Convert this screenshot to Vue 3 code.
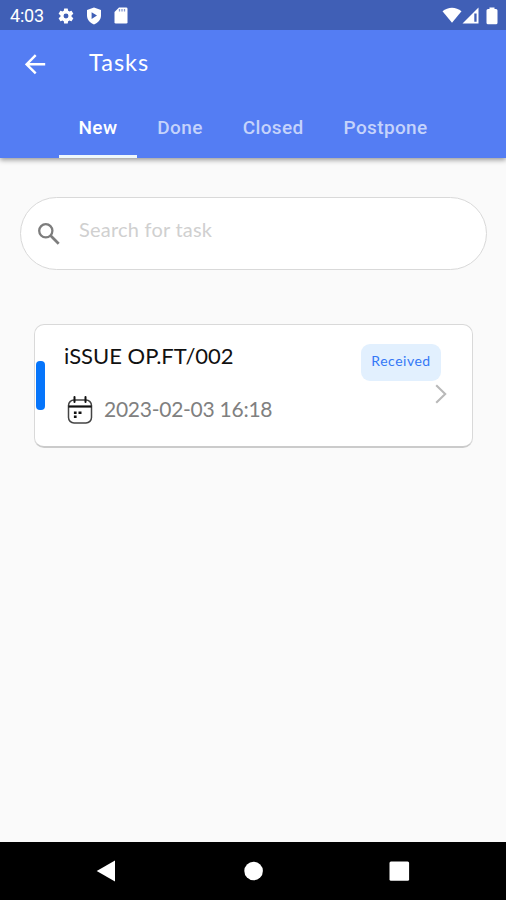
<script setup>
import { ref } from 'vue'

const tabs = ['New', 'Done', 'Closed', 'Postpone']
const active = ref('New')
const query = ref('')
const tasks = [{ title: 'iSSUE OP.FT/002', date: '2023-02-03 16:18', status: 'Received' }]
</script>

<template>
  <div class="screen">
    <header class="header">
      <div class="status">
        <span class="clock">4:03</span>
        <svg class="gear" viewBox="0 0 24 24"><path fill="#fff" fill-rule="evenodd" d="M19.4 13a7.8 7.8 0 0 0 0-2l2.1-1.6a.6.6 0 0 0 .1-.7l-2-3.4a.5.5 0 0 0-.6-.2l-2.500 1a7.300 7.300 0 0 0-1.700-1L14.400 2.400a.5.5 0 0 0-.5-.4h-4a.5.5 0 0 0-.5.4L9.100 5.100a7.700 7.700 0 0 0-1.700 1l-2.500-1a.5.5 0 0 0-.6.2l-2 3.400a.5.5 0 0 0 .1.700L4.600 11a7.800 7.800 0 0 0 0 2l-2.200 1.600a.5.5 0 0 0-.1.700l2 3.400c.1.200.400.300.6.200l2.500-1c.5.400 1.100.700 1.700 1l.300 2.700c0 .2.200.4.5.4h4c.300 0 .5-.2.5-.4l.4-2.700a7.300 7.300 0 0 0 1.700-1l2.500 1c.200.1.5 0 .6-.2l2-3.400a.5.5 0 0 0-.1-.700zM12 15.300a3.300 3.300 0 1 1 0-6.600 3.300 3.300 0 0 1 0 6.600z" /></svg>
        <svg class="shield" viewBox="0 0 16 18"><path fill="#fff" fill-rule="evenodd" d="M8 .5 15 3v5.500c0 4-3 7.500-7 9-4-1.500-7-5-7-9V3zM5.600 5.300v6.600L11 8.600z" /></svg>
        <svg class="sd" viewBox="0 0 14 17"><path fill="#fff" d="M5 .5h7.200q1.300 0 1.300 1.300v13.400q0 1.300-1.300 1.300H1.800Q.5 16.500.5 15.200V5z" /><path d="M5.500 2v2.500M8 2v2.500M10.500 2v2.500" stroke="#8397cf" stroke-width="1.300" /></svg>
        <span class="spacer"></span>
        <svg class="wifi" viewBox="0 0 20 16"><path fill="#fff" d="M.5 4.300C6-.4 14-.4 19.500 4.300L10 15.800z" /></svg>
        <svg class="signal" viewBox="0 0 17 17"><path fill="#fff" fill-rule="evenodd" d="M16.500.5v16H.5zM12.300 6.500v8.300h2.300V6.500z" /></svg>
        <svg class="battery" viewBox="0 0 12 18"><path fill="#fff" d="M3.500.5h5V2H10q1.500 0 1.500 1.500v12.300q0 1.500-1.500 1.500H2Q.5 17.300.5 15.800V3.500Q.5 2 2 2h1.500z" /></svg>
      </div>
      <div class="appbar">
        <svg class="back" viewBox="0 0 22 22"><path d="M20.200 11.300H1.900M10.700 2.200l-9.100 9.100 9.100 9.100" fill="none" stroke="#fff" stroke-width="2.400" /></svg>
        <h1>Tasks</h1>
      </div>
      <nav class="tabs">
        <button v-for="t in tabs" :key="t" :class="{ on: t === active }" @click="active = t">{{ t }}</button>
      </nav>
    </header>

    <main class="content">
      <label class="search">
        <svg viewBox="0 0 24 24"><circle cx="8.800" cy="8.800" r="6.600" fill="none" stroke="#7d7d7d" stroke-width="2.300" /><path d="m13.500 13.500 8.200 8.200" stroke="#7d7d7d" stroke-width="2.700" /></svg>
        <input v-model="query" placeholder="Search for task" />
      </label>

      <article v-for="t in tasks" :key="t.title" class="card">
        <span class="mark"></span>
        <div class="info">
          <h2>{{ t.title }}</h2>
          <div class="when">
            <svg viewBox="0 0 26 28"><rect x="1.500" y="4" width="23" height="23" rx="5.500" fill="none" stroke="#444" stroke-width="1.500" /><path d="M1.500 10.500h23" stroke="#111" stroke-width="2.200" /><path d="M7.500 1v5M18.500 1v5" stroke="#111" stroke-width="2" stroke-linecap="round" /><path d="M6.900 16.800h2.700M11.500 16.800h3M6.900 20.700h2.700" stroke="#111" stroke-width="2.400" /></svg>
            <time>{{ t.date }}</time>
          </div>
        </div>
        <div class="side">
          <span class="badge">{{ t.status }}</span>
          <svg viewBox="0 0 12 20"><path d="m1.200 1.200 9 8.800-9 8.800" fill="none" stroke="#b9b9b9" stroke-width="2.100" /></svg>
        </div>
      </article>
    </main>

    <footer class="navbar">
      <svg viewBox="0 0 22 22"><path fill="#fff" d="M19 .5v21L.7 11z" /></svg>
      <svg viewBox="0 0 22 22"><circle cx="11.600" cy="11" r="9.300" fill="#fff" /></svg>
      <svg viewBox="0 0 22 22"><rect x="1.500" y="1.500" width="19.600" height="19.300" rx="1.500" fill="#fff" /></svg>
    </footer>
  </div>
</template>

<style>
body { margin: 0; }
</style>

<style scoped>
* { box-sizing: border-box; }
.screen { display: flex; flex-direction: column; width: 506px; height: 900px; overflow: hidden; background: #fafafa; font-family: Lato, sans-serif; }
svg { display: block; flex: none; }
.header { height: 158px; background: #547df3; box-shadow: 0 2px 5px rgba(0, 0, 0, .4); }
.status { display: flex; align-items: center; height: 30px; padding: 1px 8px 0 10px; background: #405fb6; color: #fff; }
.clock { width: 48px; font: 400 18px/30px Roboto, sans-serif; letter-spacing: -.2px; }
.gear { width: 18px; height: 18px; margin-left: -1px; }
.shield { width: 16px; height: 18px; margin-left: 10.500px; }
.sd { width: 14px; height: 17px; margin-left: 12px; }
.spacer { flex: 1; }
.wifi { width: 20px; height: 16px; margin-top: -2px; }
.signal { width: 17px; height: 17px; }
.battery { width: 12px; height: 18px; margin-left: 7px; }
.appbar { display: flex; align-items: center; height: 68px; padding-left: 25px; }
.back { width: 22px; height: 22px; }
h1 { margin: 0 0 4px 42px; color: #fff; font-size: 23.500px; font-weight: 400; line-height: 28px; letter-spacing: 1px; }
.tabs { display: flex; height: 60px; padding-left: 58.500px; }
.tabs button { height: 60px; padding: 2px 20px 0; border: 0; border-bottom: 3px solid transparent; background: none; color: #c5d3fb; font: 500 19px/55px Roboto, sans-serif; letter-spacing: .36px; }
.tabs button.on { border-color: #eef7fc; color: #fff; }
.content { flex: 1; padding: 39px 19px 0 20px; }
.search { display: flex; align-items: center; height: 73px; padding-left: 16px; border: 1px solid #d9d9d9; border-radius: 37px; background: #fff; }
.search svg { width: 24px; height: 24px; }
.search input { flex: 1; min-width: 0; height: 30px; margin: 0 20px 9px 18px; padding: 0; border: 0; outline: 0; background: none; font: 400 20px/30px Lato, sans-serif; letter-spacing: .22px; }
.search input::placeholder { color: #d0d0d0; opacity: 1; }
.card { display: flex; height: 124px; margin: 54px 14px 0; border: 1px solid #d9d9d9; border-bottom: 2px solid #cbcbcb; border-radius: 10px; background: #fff; }
.mark { width: 9px; height: 49px; margin: 36px 0 0 1px; border-radius: 4px; background: #0675fb; }
.info { flex: 1; padding: 16px 0 0 19px; }
h2 { margin: 0; color: #111; font-size: 22px; font-weight: 400; line-height: 30px; white-space: nowrap; }
.when { display: flex; align-items: center; margin-top: 22px; color: #808080; }
.when svg { width: 26px; height: 28px; margin: 3px 0 0 2.500px; }
time { margin-left: 11.500px; font-size: 21px; line-height: 30px; letter-spacing: -.26px; white-space: nowrap; }
.side { display: flex; flex-direction: column; align-items: flex-end; width: 90px; padding: 19px 25px 0 0; }
.badge { display: flex; justify-content: center; width: 80px; height: 37px; margin-right: 6px; border-radius: 9px; background: #e2f0fe; color: #3478f6; font-size: 14px; line-height: 34px; letter-spacing: .5px; }
.side svg { width: 12px; height: 20px; margin-top: 3px; }
.navbar { display: flex; justify-content: space-between; height: 58px; padding: 18px 96px 0; background: #000; }
.navbar svg { width: 22px; height: 22px; }
</style>
